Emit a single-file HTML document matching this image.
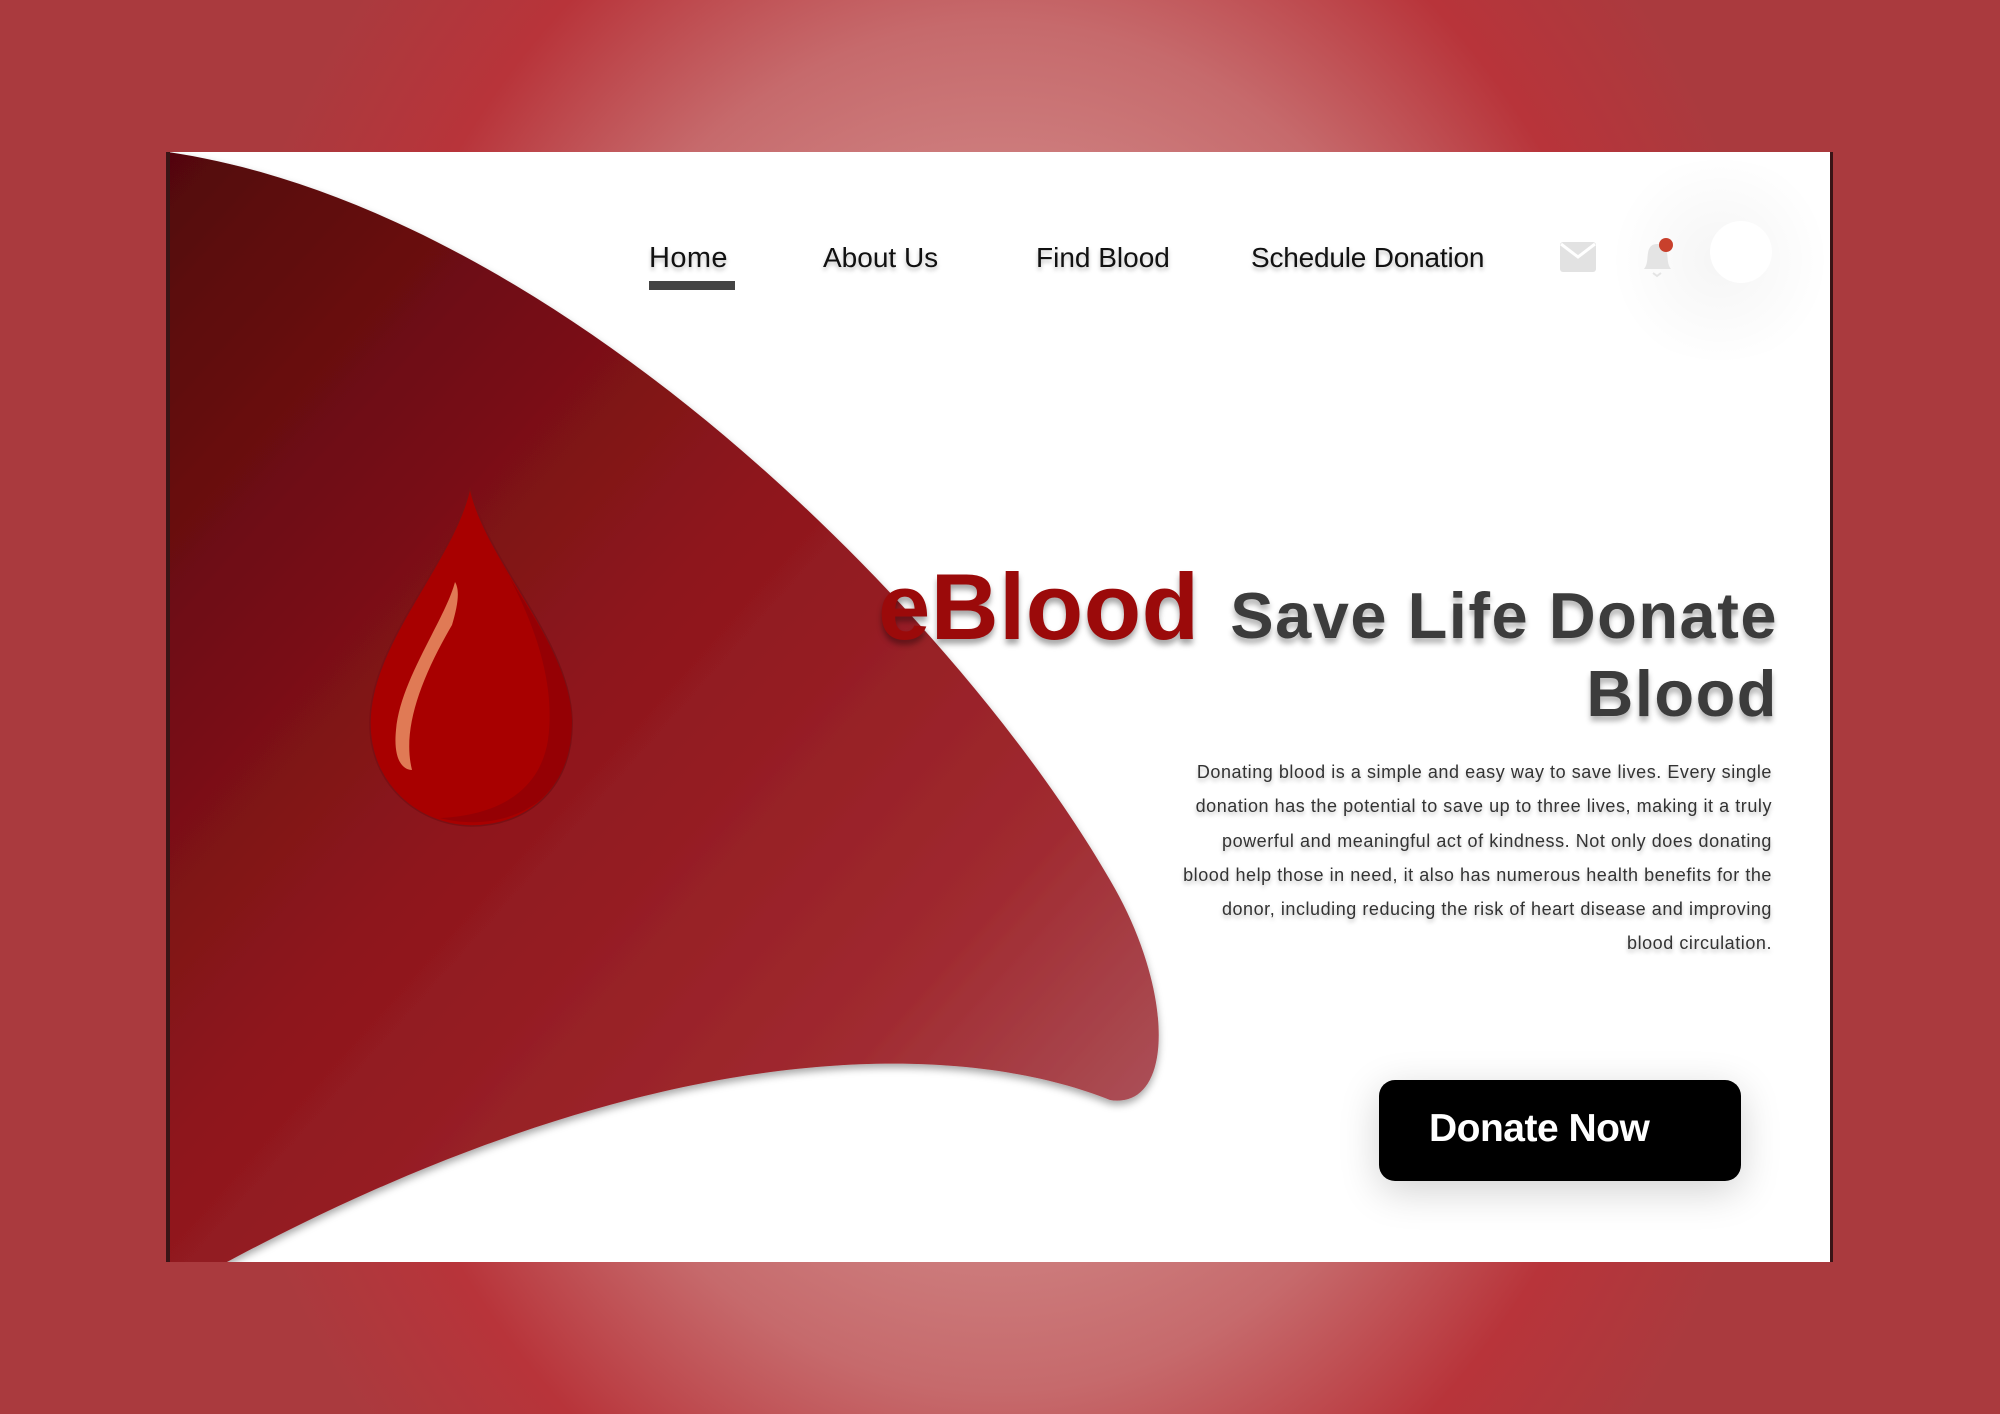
<!DOCTYPE html>
<html><head><meta charset="utf-8"><style>
html,body{margin:0;padding:0}
body{width:2000px;height:1414px;position:relative;overflow:hidden;font-family:"Liberation Sans",sans-serif;
background:radial-gradient(ellipse 42% 78% at 50% 50%,#d89494 0%,#cf8282 45%,#c66a6c 62%,#b8343a 82%,#aa3a3e 100%);}
.card{position:absolute;left:166px;top:152px;width:1667px;height:1110px;background:#fff;overflow:hidden;border-left:4px solid #3a1416;border-right:3px solid #3a1416;box-sizing:border-box}
.abs{position:absolute;white-space:nowrap}
.nav{font-size:28px;color:#111;top:242px;text-shadow:0 3px 4px rgba(0,0,0,.25)}
</style></head><body>
<div class="card"></div>
<svg class="abs" style="left:0;top:0" width="2000" height="1414" viewBox="0 0 2000 1414">
<defs>
<linearGradient id="g" x1="0" y1="0" x2="1" y2="1">
<stop offset="0" stop-color="#52060a"/>
<stop offset="0.45" stop-color="#8e161c"/>
<stop offset="0.75" stop-color="#a02a30"/>
<stop offset="1" stop-color="#b06068"/>
</linearGradient>
<filter id="sh" x="-10%" y="-10%" width="120%" height="120%"><feDropShadow dx="0" dy="4" stdDeviation="4" flood-color="#000" flood-opacity="0.35"/></filter>
<clipPath id="cp"><rect x="170" y="152" width="1660" height="1110"/></clipPath>
</defs>
<g clip-path="url(#cp)">
<path filter="url(#sh)" fill="url(#g)" d="M168,152 C560,210 960,620 1110,880 C1175,990 1175,1110 1110,1100 C960,1040 660,1030 227,1262 L168,1262 Z"/>
</g>
<path d="M470,487 C455,560 372,640 370,720 C368,785 420,826 472,826 C530,826 574,785 572,720 C570,640 485,560 470,487 Z" fill="#a80000" stroke="#7a1015" stroke-width="1.5"/>
<path d="M572,720 C570,660 520,600 500,560 C540,630 555,690 548,740 C540,790 500,815 440,818 C470,826 510,824 540,800 C562,780 572,755 572,720 Z" fill="#950004"/>
<path d="M455,582 C445,620 400,680 396,730 C393,760 403,770 412,770 C402,730 420,680 452,625 C458,605 460,590 455,582 Z" fill="#e07a55"/>
</svg>
<div class="abs nav" style="left:649px;font-size:29px;letter-spacing:0.4px">Home</div>
<div class="abs" style="left:649px;top:281px;width:86px;height:9px;background:#444"></div>
<div class="abs nav" style="left:823px">About Us</div>
<div class="abs nav" style="left:1036px">Find Blood</div>
<div class="abs nav" style="left:1251px;letter-spacing:-0.2px">Schedule Donation</div>
<div class="abs" style="left:1600px;top:160px;width:240px;height:200px;border-radius:50%;background:radial-gradient(circle,rgba(0,0,0,.04),rgba(0,0,0,0) 70%)"></div>
<svg class="abs" style="left:1560px;top:242px" width="36" height="30" viewBox="0 0 36 30"><rect x="0" y="0" width="36" height="30" rx="3" fill="#e2e2e2"/><path d="M1,2 L18,15 L35,2" fill="none" stroke="#fff" stroke-width="3"/></svg>
<svg class="abs" style="left:1638px;top:236px" width="40" height="44" viewBox="0 0 40 44"><path d="M6,33 C10,28 9,22 10,17 C11,10 15,8 19,8 C24,8 28,11 29,17 C30,22 29,28 33,33 Z" fill="#e4e4e4"/><path d="M15,37 L19,40 L23,37" fill="none" stroke="#e4e4e4" stroke-width="2"/><circle cx="28" cy="9" r="7" fill="#c8402c"/></svg>
<div class="abs" style="left:1710px;top:221px;width:62px;height:62px;border-radius:50%;background:#fff"></div>
<div class="abs" style="left:878px;top:553px;font-size:94px;font-weight:bold;color:#9b0a0a;letter-spacing:0.5px;text-shadow:0 5px 6px rgba(0,0,0,.35)">eBlood</div>
<div class="abs" style="right:222px;top:577px;font-size:65px;font-weight:bold;color:#3c3c3c;letter-spacing:1.5px;text-align:right;line-height:78px;text-shadow:0 5px 6px rgba(0,0,0,.3)">Save Life Donate<br>Blood</div>
<div class="abs" style="right:228px;top:755px;font-size:18px;line-height:34.3px;color:#333;letter-spacing:0.55px;text-align:right;text-shadow:0 3px 4px rgba(0,0,0,.25)">Donating blood is a simple and easy way to save lives. Every single<br>donation has the potential to save up to three lives, making it a truly<br>powerful and meaningful act of kindness. Not only does donating<br>blood help those in need, it also has numerous health benefits for the<br>donor, including reducing the risk of heart disease and improving<br>blood circulation.</div>
<div class="abs" style="left:1379px;top:1080px;width:362px;height:101px;border-radius:16px;background:#000;box-shadow:0 10px 40px rgba(0,0,0,.18)"></div>
<div class="abs" style="left:1429px;top:1107px;font-size:39px;font-weight:bold;color:#fff;letter-spacing:-0.5px">Donate Now</div>
</body></html>
